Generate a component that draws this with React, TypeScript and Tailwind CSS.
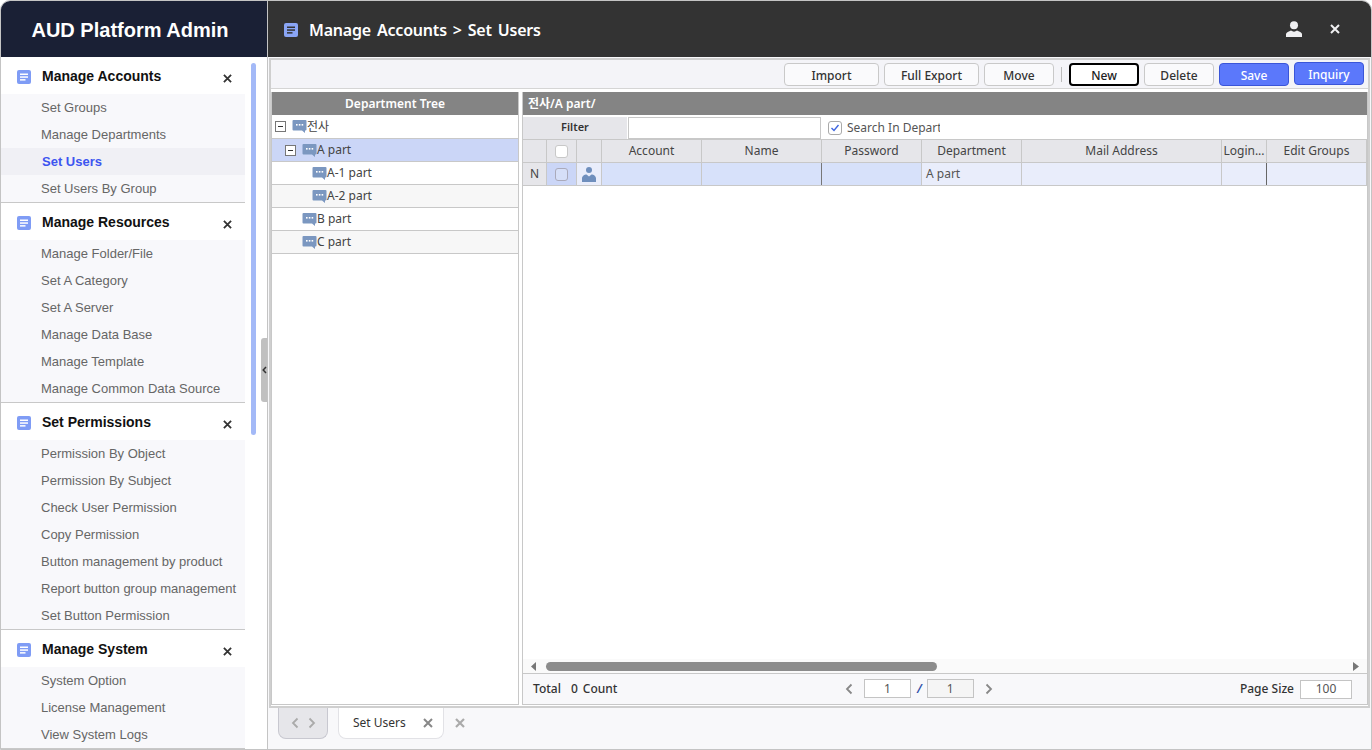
import React from "react";

const groups = [
  { title: "Manage Accounts", items: ["Set Groups", "Manage Departments", "Set Users", "Set Users By Group"] },
  { title: "Manage Resources", items: ["Manage Folder/File", "Set A Category", "Set A Server", "Manage Data Base", "Manage Template", "Manage Common Data Source"] },
  { title: "Set Permissions", items: ["Permission By Object", "Permission By Subject", "Check User Permission", "Copy Permission", "Button management by product", "Report button group management", "Set Button Permission"] },
  { title: "Manage System", items: ["System Option", "License Management", "View System Logs"] },
];

const DocIcon = ({ size = 14, bg = "#7f9cf5", line = "#fff" }: { size?: number; bg?: string; line?: string }) => (
  <svg width={size} height={size} viewBox="0 0 14 14" className="shrink-0">
    <rect width="14" height="14" rx="2" fill={bg} />
    <rect x="3" y="3.5" width="8" height="1.5" fill={line} />
    <rect x="3" y="6.3" width="8" height="1.5" fill={line} />
    <rect x="3" y="9.1" width="5.5" height="1.5" fill={line} />
  </svg>
);

const Bubble = () => (
  <svg width="15" height="15" viewBox="0 0 15 15" className="shrink-0">
    <path d="M1.5 1h12a1 1 0 0 1 1 1v8.5a1 1 0 0 1-1 1h-.5v2.5l-3-2.5h-8.500a1 1 0 0 1-1-1V2a1 1 0 0 1 1-1z" fill="#7b97c0" />
    <rect x="4" y="5" width="1.600" height="1.600" fill="#fff" />
    <rect x="6.800" y="5" width="1.600" height="1.600" fill="#fff" />
    <rect x="9.600" y="5" width="1.600" height="1.600" fill="#fff" />
  </svg>
);

const Minus = () => (
  <span className="flex h-[11px] w-[11px] shrink-0 items-center justify-center border border-[#777] bg-white">
    <span className="h-px w-[5px] bg-[#333]" />
  </span>
);

const HeaderPerson = () => (
  <svg width="16" height="16" viewBox="0 0 16 16" className="shrink-0">
    <circle cx="8" cy="4.200" r="4" fill="#f0f0f2" />
    <path d="M0 16v-3c0-1.500 3-2.500 5-3.500 2 1.500 4 1.500 6 0 2 1 5 2 5 3.500v3z" fill="#f0f0f2" />
  </svg>
);

const RowPerson = () => (
  <svg width="14" height="15" viewBox="0 0 14 15" className="shrink-0">
    <circle cx="7" cy="3" r="3" fill="#6f8fbd" />
    <path d="M0 15v-3.500c0-2.500 2.500-4 4.500-4l2.500 2 2.500-2c2 0 4.500 1.500 4.500 4V15z" fill="#6f8fbd" />
  </svg>
);

const X = ({ size = 10, color = "#444", w = 2 }: { size?: number; color?: string; w?: number }) => (
  <svg width={size} height={size} viewBox="0 0 10 10" className="shrink-0">
    <path d="M1 1l8 8M9 1l-8 8" stroke={color} strokeWidth={w} fill="none" />
  </svg>
);

const Chev = ({ left, color = "#888" }: { left?: boolean; color?: string }) => (
  <svg width="8" height="12" viewBox="0 0 8 12" className="shrink-0">
    <path d={left ? "M6.500 1.500L2 6l4.500 4.500" : "M1.500 1.500L6 6l-4.500 4.500"} stroke={color} strokeWidth="1.800" fill="none" />
  </svg>
);

const btn = "flex h-[23px] items-center justify-center rounded-[4px] pt-[3px] text-[12px] font-medium";
const plain = "border border-[#c9c9c9] bg-[#fafafc] text-[#333]";
const blue = "border border-[#3a55d8] bg-[#5b78fb] text-white";

const treeRows: { label: string; h: string; indent: string; minus?: boolean; sel?: boolean; alt?: boolean }[] = [
  { label: "전사", h: "h-[24px]", indent: "pl-[3px]", minus: true },
  { label: "A part", h: "h-[23px]", indent: "pl-[13px]", minus: true, sel: true },
  { label: "A-1 part", h: "h-[23px]", indent: "pl-[40px]" },
  { label: "A-2 part", h: "h-[23px]", indent: "pl-[40px]", alt: true },
  { label: "B part", h: "h-[23px]", indent: "pl-[30px]" },
  { label: "C part", h: "h-[23px]", indent: "pl-[30px]", alt: true },
];

const gridCols = "grid grid-cols-[24px_30px_25px_100px_120px_100px_100px_200px_45px_100px]";
const heads = ["", "", "", "Account", "Name", "Password", "Department", "Mail Address", "Login...", "Edit Groups"];

export default function App() {
  return (
    <div className="flex h-[750px] w-[1372px] overflow-hidden rounded-t-[10px] border border-[#c4c4c4] bg-[#f8f8fa] font-['Noto_Sans','Noto_Sans_CJK_KR',sans-serif] text-[12px] text-[#333]">
      <aside className="relative flex w-[267px] shrink-0 flex-col overflow-hidden border-r border-[#c4c4c4] bg-white font-['Liberation_Sans',sans-serif]">
        <div className="flex h-[56px] shrink-0 items-center justify-center bg-[#1a2035] pr-[8px] pt-[2px] text-[20px] font-bold text-white">AUD Platform Admin</div>
        <div className="w-[244px]">
          {groups.map((g) => (
            <div key={g.title} className="border-b border-[#c8c8c8]">
              <div className="flex h-[37px] items-center pl-[16px] pr-[13px]">
                <span className="mt-[3px]"><DocIcon /></span>
                <span className="ml-[11px] flex-1 pt-[2px] text-[14px] font-bold text-[#111]">{g.title}</span>
                <span className="mt-[6px]"><X size={9} color="#333" /></span>
              </div>
              <div className="bg-[#f8f8fb]">
                {g.items.map((it) => {
                  const on = it === "Set Users";
                  return (
                    <div key={it} className={on ? "flex h-[27px] items-center bg-[#f0f0f5] pl-[41px] text-[13px] font-bold text-[#3d55f0]" : "flex h-[27px] items-center whitespace-nowrap pl-[40px] text-[13px] text-[#666]"}>
                      {it}
                    </div>
                  );
                })}
              </div>
            </div>
          ))}
        </div>
        <div className="absolute left-[250px] top-[62px] h-[372px] w-[5px] rounded-[3px] bg-[#a3b9f7]" />
        <div className="absolute left-[260px] top-[337px] flex h-[64px] w-[7px] items-center justify-center rounded-l-[3px] bg-[#c0c0c0]">
          <svg width="5" height="8" viewBox="0 0 5 8"><path d="M4 1L1.200 4 4 7" stroke="#333" strokeWidth="1.500" fill="none" /></svg>
        </div>
      </aside>

      <main className="flex min-w-0 flex-1 flex-col">
        <header className="flex h-[56px] shrink-0 items-center bg-[#333333] pl-[16px] pr-[31px] text-white">
          <span className="mt-[1px]"><DocIcon line="#333" bg="#8aa5f5" /></span>
          <span className="ml-[11px] pt-[2px] text-[16px] font-semibold tracking-[-0.2px] [word-spacing:2px]">Manage Accounts &gt; Set Users</span>
          <span className="ml-auto"><HeaderPerson /></span>
          <span className="ml-[28px]"><X size={10} color="#f0f0f2" /></span>
        </header>

        <div className="mx-[1px] mt-[1px] flex h-[650px] flex-col border-2 border-[#cfcfcf] bg-white pb-[1px]">
          <div className="flex h-[29px] shrink-0 items-center justify-end border-b border-[#d5d5d5] bg-[#f4f4f8] pr-[4px]">
            <div className={`${btn} ${plain} w-[95px]`}>Import</div>
            <div className={`${btn} ${plain} ml-[5px] w-[95px]`}>Full Export</div>
            <div className={`${btn} ${plain} ml-[5px] w-[70px]`}>Move</div>
            <div className="ml-[7px] h-[15px] w-px bg-[#bbb]" />
            <div className={`${btn} ml-[7px] w-[70px] border-2 border-black bg-white text-[#222]`}>New</div>
            <div className={`${btn} ${plain} ml-[5px] w-[70px]`}>Delete</div>
            <div className={`${btn} ${blue} ml-[5px] w-[70px]`}>Save</div>
            <div className={`${btn} ${blue} mb-[2px] ml-[5px] w-[70px]`}>Inquiry</div>
          </div>

          <div className="flex min-h-0 flex-1 gap-[3px] pt-[3px]">
            <section className="flex w-[248px] shrink-0 flex-col border border-t-0 border-[#c8c8c8]">
              <div className="flex h-[23px] shrink-0 items-center justify-center bg-[#848484] font-semibold text-white">Department Tree</div>
              {treeRows.map((r) => (
                <div key={r.label} className={`flex shrink-0 items-center border-b border-[#c8c8c8] ${r.h} ${r.indent} ${r.sel ? "bg-[#cbd6f7]" : r.alt ? "bg-[#f7f7f7]" : "bg-white"}`}>
                  {r.minus && <span className="mr-[6px]"><Minus /></span>}
                  <Bubble />
                  <span className="text-[#444]">{r.label}</span>
                </div>
              ))}
            </section>

            <section className="flex min-w-0 flex-1 flex-col border border-t-0 border-[#c8c8c8]">
              <div className="flex h-[23px] shrink-0 items-center bg-[#848484] pl-[5px] font-semibold text-white">전사/A part/</div>
              <div className="flex h-[24px] shrink-0 items-center pt-[1px]">
                <div className="flex h-[22px] w-[104px] items-center justify-center bg-[#e6e6ea] text-[11px] font-semibold">Filter</div>
                <div className="ml-px h-[22px] w-[193px] border border-[#c8c8c8] bg-white" />
                <span className="ml-[7px] flex h-[14px] w-[14px] items-center justify-center rounded-[3px] border border-[#aaa] bg-white">
                  <svg width="10" height="10" viewBox="0 0 10 10"><path d="M1.500 5l2.500 2.500L8.500 2" stroke="#3f66e0" strokeWidth="1.400" fill="none" /></svg>
                </span>
                <span className="ml-[5px] w-[93px] overflow-hidden whitespace-nowrap text-[#555]">Search In Department</span>
              </div>
              <div className={`${gridCols} h-[24px] shrink-0 border-y border-[#c8c8c8] bg-[#e6e6ea]`}>
                {heads.map((h, i) => (
                  <div key={i} className="flex items-center justify-center overflow-hidden whitespace-nowrap border-r border-[#c8c8c8] text-[#444]">
                    {i === 1 ? <span className="h-[13px] w-[13px] rounded-[3px] border border-[#c8c8c8] bg-white" /> : h}
                  </div>
                ))}
              </div>
              <div className={`${gridCols} h-[23px] shrink-0 border-b border-[#c8c8c8] bg-[#e9edfb]`}>
                <div className="flex items-center justify-center border-r border-[#c8c8c8] bg-[#e6e6ea] text-[#444]">N</div>
                <div className="flex items-center justify-center border-r border-[#c8c8c8] bg-[#cbd6f7]"><span className="h-[13px] w-[13px] rounded-[3px] border border-[#aab] bg-[#d6dff8]" /></div>
                <div className="flex items-center justify-center border-r border-[#c8c8c8]"><RowPerson /></div>
                <div className="border-r border-[#c8c8c8] bg-[#d7e1fa]" />
                <div className="border-r border-[#777] bg-[#d7e1fa]" />
                <div className="border-r border-[#c8c8c8] bg-[#d7e1fa]" />
                <div className="flex items-center border-r border-[#c8c8c8] pl-[4px] text-[#555]">A part</div>
                <div className="border-r border-[#c8c8c8]" />
                <div className="border-r border-[#666]" />
                <div className="border-r border-[#c8c8c8]" />
              </div>
              <div className="flex-1" />
              <div className="flex h-[14px] shrink-0 items-center bg-[#fafafa] px-[8px]">
                <svg width="6" height="9" viewBox="0 0 6 9" className="shrink-0"><path d="M5 0v9L0 4.500z" fill="#777" /></svg>
                <div className="ml-[9px] h-[9px] w-[391px] rounded-[5px] bg-[#8c8c8c]" />
                <svg width="6" height="9" viewBox="0 0 6 9" className="ml-auto shrink-0"><path d="M0 0v9l6-4.500z" fill="#777" /></svg>
              </div>
              <div className="relative flex h-[31px] shrink-0 items-center border-t border-[#c8c8c8] bg-[#f8f8fa] pl-[10px] pr-[15px] font-medium">
                <span>Total</span>
                <span className="ml-[10px]">0</span>
                <span className="ml-[5px]">Count</span>
                <div className="absolute left-[322px] top-[5px] flex items-center font-normal">
                  <Chev left />
                  <span className="ml-[11px] flex h-[19px] w-[47px] items-center justify-center border border-[#c4c4c4] bg-white text-[#555]">1</span>
                  <span className="ml-[6px] mr-[5px] font-semibold italic text-[#2f4fa8]">/</span>
                  <span className="flex h-[19px] w-[47px] items-center justify-center border border-[#c4c4c4] bg-[#f5f5f5] text-[#555]">1</span>
                  <span className="ml-[11px]"><Chev /></span>
                </div>
                <span className="ml-auto">Page Size</span>
                <span className="ml-[6px] flex h-[19px] w-[52px] items-center justify-center border border-[#c4c4c4] bg-white font-normal text-[#555]">100</span>
              </div>
            </section>
          </div>
        </div>

        <div className="flex flex-1 items-start pl-[10px]">
          <div className="flex h-[31px] w-[50px] items-center justify-center gap-[9px] rounded-b-[8px] border border-t-0 border-[#c8c8d0] bg-[#e6e6ea]">
            <Chev left color="#aaa" />
            <Chev color="#aaa" />
          </div>
          <div className="ml-[10px] flex h-[31px] w-[106px] items-center rounded-b-[8px] border border-t-0 border-[#e2e2e6] bg-white pl-[14px] text-[#333]">
            Set Users
            <span className="ml-[17px]"><X size={10} color="#888" /></span>
          </div>
          <span className="ml-[11px] mt-[10px]"><X size={10} color="#aaa" w={2.200} /></span>
        </div>
      </main>
    </div>
  );
}
